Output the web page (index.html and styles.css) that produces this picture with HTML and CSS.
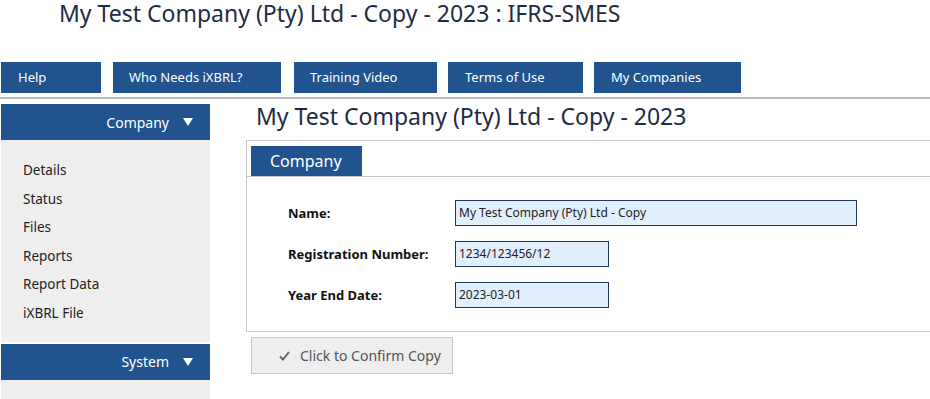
FILE: index.html
```html
<!DOCTYPE html>
<html>
<head>
<meta charset="utf-8">
<title>My Test Company</title>
<link rel="stylesheet" href="styles.css">
</head>
<body>
<header class="top">
  <h1 class="site-title">My Test Company (Pty) Ltd - Copy - 2023 : IFRS-SMES</h1>
  <nav class="nav">
    <a class="nav-btn nav-help">Help</a>
    <a class="nav-btn nav-who">Who Needs iXBRL?</a>
    <a class="nav-btn nav-video">Training Video</a>
    <a class="nav-btn nav-terms">Terms of Use</a>
    <a class="nav-btn nav-companies">My Companies</a>
  </nav>
</header>
<div class="rule"></div>
<div class="layout">
  <aside class="sidebar">
    <div class="side-head"><span>Company</span><span class="tri"></span></div>
    <ul class="side-list">
      <li>Details</li>
      <li>Status</li>
      <li>Files</li>
      <li>Reports</li>
      <li>Report Data</li>
      <li>iXBRL File</li>
    </ul>
    <div class="side-head side-head-sys"><span>System</span><span class="tri"></span></div>
    <div class="side-fill"></div>
  </aside>
  <main class="main">
    <h2 class="page-title">My Test Company (Pty) Ltd - Copy - 2023</h2>
    <section class="panel">
      <div class="tabs"><div class="tab">Company</div></div>
      <div class="form">
        <div class="row">
          <label class="lbl">Name:</label>
          <div class="inp inp-wide">My Test Company (Pty) Ltd - Copy</div>
        </div>
        <div class="row">
          <label class="lbl">Registration Number:</label>
          <div class="inp">1234/123456/12</div>
        </div>
        <div class="row">
          <label class="lbl">Year End Date:</label>
          <div class="inp">2023-03-01</div>
        </div>
      </div>
    </section>
    <button class="confirm">
      <svg class="check" width="11" height="10" viewBox="0 0 11 10"><path d="M1 5.5 L4 8.5 L10 1" fill="none" stroke="#666" stroke-width="2"/></svg>
      <span>Click to Confirm Copy</span>
    </button>
  </main>
</div>
</body>
</html>
```
FILE: styles.css
```css
html, body {
  margin: 0;
  padding: 0;
  overflow: hidden;
  background: #fff;
}
body {
  font-family: "Noto Sans", "Open Sans", sans-serif;
  color: #222;
  width: 930px;
  height: 399px;
}
.site-title {
  margin: 0 0 0 59px;
  padding-top: 1px;
  font-weight: 400;
  font-size: 23px;
  line-height: 25px;
  height: 25px;
  color: #1e2b45;
}
.nav {
  display: flex;
  margin: 36px 0 0 1px;
  height: 31px;
}
.nav-btn {
  display: flex;
  align-items: center;
  box-sizing: border-box;
  height: 31px;
  padding-left: 16px;
  padding-bottom: 1px;
  background: #21548f;
  color: #fff;
  font-size: 13px;
  margin-right: 12px;
}
.nav-help { width: 100px; padding-left: 17px; }
.nav-who { width: 168px; margin-right: 13px; }
.nav-video { width: 143px; margin-right: 11px; }
.nav-terms { width: 135px; padding-left: 17px; margin-right: 11px; }
.nav-companies { width: 147px; padding-left: 17px; }
.rule {
  margin-top: 4px;
  height: 2px;
  background: #b8b8b8;
}
.layout {
  display: flex;
  margin-top: 5px;
}
.sidebar {
  width: 209px;
  margin-left: 1px;
  flex: none;
}
.side-head {
  display: flex;
  align-items: center;
  justify-content: flex-end;
  height: 36px;
  background: #21548f;
  color: #fff;
  font-size: 14px;
  padding-right: 17px;
}
.tri {
  width: 0;
  height: 0;
  border-left: 5px solid transparent;
  border-right: 5px solid transparent;
  border-top: 8px solid #fff;
  margin-left: 14px;
}
.side-list {
  list-style: none;
  margin: 0 0 2px;
  padding: 16px 0 14px 22px;
  background: #eeeeee;
}
.side-list li {
  height: 28.6px;
  line-height: 28.6px;
  font-size: 13.5px;
  color: #222;
}
.side-fill {
  height: 19px;
  background: #eeeeee;
}
.main {
  margin-left: 36px;
  flex: none;
  width: 720px;
}
.page-title {
  margin: 0 0 0 10px;
  font-weight: 400;
  font-size: 23px;
  line-height: 25px;
  height: 36px;
  color: #1e2b45;
}
.panel {
  border: 1px solid #c8c8c8;
  height: 192px;
  box-sizing: border-box;
}
.tabs {
  padding: 5px 0 0 4px;
  border-bottom: 1px solid #c8c8c8;
}
.tab {
  display: inline-block;
  width: 111px;
  height: 30px;
  box-sizing: border-box;
  padding-left: 19px;
  background: #21548f;
  color: #fff;
  font-size: 16px;
  line-height: 30px;
  vertical-align: bottom;
}
.form {
  padding: 23px 0 0 41px;
}
.row {
  display: flex;
  align-items: center;
  height: 26px;
  margin-bottom: 15px;
}
.lbl {
  width: 167px;
  font-size: 13px;
  font-weight: 700;
  color: #111;
}
.inp {
  box-sizing: border-box;
  width: 154px;
  height: 26px;
  border: 1px solid #1d3a5c;
  background: #e1eefb;
  font-size: 12px;
  line-height: 24px;
  padding-left: 3px;
  color: #222;
}
.inp-wide { width: 402px; }
.confirm {
  display: flex;
  align-items: center;
  margin: 5px 0 0 5px;
  width: 202px;
  height: 37px;
  box-sizing: border-box;
  background: #eeeeee;
  border: 1px solid #c8c8c8;
  padding: 0 0 0 27px;
  font-family: "Noto Sans", "Open Sans", sans-serif;
  font-size: 14px;
  color: #555;
}
.check {
  margin-right: 10px;
}
```
